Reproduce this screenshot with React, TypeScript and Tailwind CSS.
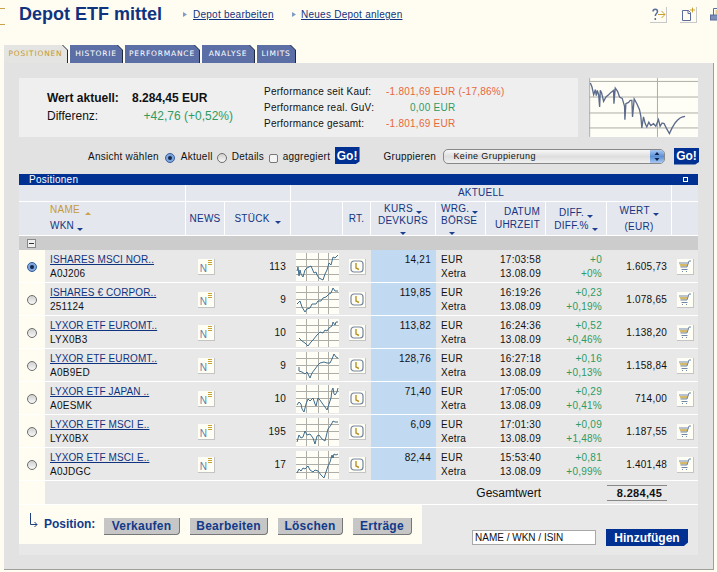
const rows = [
  { name: 'ISHARES MSCI NOR..', wkn: 'A0J206', qty: '113', kurs: '14,21', time: '17:03:58', diff: '+0', pct: '+0%', wert: '1.605,73', selected: true,
    line: '1,18 2,14 3,23 4,17 5,21 7,24 9,17 11,15 15,13 18,20 20,19 21,22 23,25 27,27 29,21 31,17 33,10 35,12 37,4 39,5 42,2' },
  { name: 'ISHARES € CORPOR..', wkn: '251124', qty: '9', kurs: '119,85', time: '16:19:26', diff: '+0,23', pct: '+0,19%', wert: '1.078,65',
    line: '1,18 4,15 6,21 9,26 11,23 14,22 16,18 20,18 22,15 25,15 27,12 30,11 33,8 35,7 37,2 39,5 42,5' },
  { name: 'LYXOR ETF EUROMT..', wkn: 'LYX0B3', qty: '10', kurs: '113,82', time: '16:24:36', diff: '+0,52', pct: '+0,46%', wert: '1.138,20',
    line: '3,19 6,22 9,24 12,27 15,23 17,21 21,16 24,13 27,14 29,11 31,12 33,9 36,7 37,3 39,6 40,3 42,3' },
  { name: 'LYXOR ETF EUROMT..', wkn: 'A0B9ED', qty: '9', kurs: '128,76', time: '16:27:18', diff: '+0,16', pct: '+0,13%', wert: '1.158,84',
    line: '3,15 3,19 6,20 9,22 11,20 14,26 16,21 19,17 22,13 24,11 28,10 31,11 34,11 36,7 38,2 40,5 42,6' },
  { name: 'LYXOR ETF JAPAN ..', wkn: 'A0ESMK', qty: '10', kurs: '71,40', time: '17:05:00', diff: '+0,29', pct: '+0,41%', wert: '714,00',
    line: '1,20 3,17 5,19 6,24 8,27 10,19 12,14 14,16 17,13 19,19 20,21 22,13 24,15 26,18 29,22 31,25 33,19 35,13 36,5 37,3 38,9 39,10 41,7 42,3' },
  { name: 'LYXOR ETF MSCI E..', wkn: 'LYX0BX', qty: '195', kurs: '6,09', time: '17:01:30', diff: '+0,09', pct: '+1,48%', wert: '1.187,55',
    line: '1,24 3,17 5,20 7,19 9,13 11,17 14,16 17,20 19,26 21,18 23,17 26,21 29,23 31,15 32,11 35,7 37,3 39,4 42,4' },
  { name: 'LYXOR ETF MSCI E..', wkn: 'A0JDGC', qty: '17', kurs: '82,44', time: '15:53:40', diff: '+0,81', pct: '+0,99%', wert: '1.401,48',
    line: '1,22 3,18 5,20 7,17 9,18 12,15 14,19 17,21 19,19 22,20 25,24 28,27 30,21 32,15 34,11 36,4 37,7 38,3 40,4 42,3' },
];

function SortDown({ className = '' }: { className?: string }) {
  return (
    <svg width="6" height="3" viewBox="0 0 6 3" className={`inline-block align-[-2px] ${className}`}>
      <path d="M0 0h6L3 3z" fill="#1c3f8f" />
    </svg>
  );
}

function SortUp() {
  return (
    <svg width="6" height="3" viewBox="0 0 6 3" className="inline-block align-[-2px] ml-[2px]">
      <path d="M0 3h6L3 0z" fill="#c9a24a" />
    </svg>
  );
}

function Radio({ on = false, row = false }: { on?: boolean; row?: boolean }) {
  const size = row ? 'w-[10px] h-[10px]' : 'w-[10px] h-[10px] mt-[6px]';
  if (on) {
    return (
      <span className={`${size} inline-flex items-center justify-center rounded-full bg-[#7ea6dc] border border-[#3a5f9c]`}>
        <span className="w-[4px] h-[4px] rounded-full bg-[#12284f]" />
      </span>
    );
  }
  return <span className={`${size} inline-block rounded-full bg-gradient-to-b from-[#d0d0d0] to-[#f8f8f8] border border-[#6d6d6d]`} />;
}

function GoButton() {
  return (
    <button className="w-[25px] h-[17px] bg-[#003092] text-white text-[12px] font-bold tracking-normal leading-[16px] [clip-path:polygon(0_0,100%_0,100%_85%,85%_100%,0_100%)]">
      Go!
    </button>
  );
}

function IconBox({ children, className = '' }: { children: React.ReactNode; className?: string }) {
  return (
    <div className={`w-[17px] h-[16px] bg-[#fffef4] border-r border-b border-[#c4c4c4] flex items-center justify-center ${className}`}>
      {children}
    </div>
  );
}

function NewsIcon() {
  return (
    <IconBox className="relative ml-[12px]">
      <span className="text-[10px] leading-none text-[#5f7fa8] mt-[4px] mr-[5px]">N</span>
      <svg width="4" height="5" viewBox="0 0 4 5" className="absolute top-[1px] right-[2px]">
        <path d="M0 .5h4M0 2.500h4M0 4.500h4" stroke="#c9a230" strokeWidth="1" />
      </svg>
    </IconBox>
  );
}

function ClockIcon() {
  return (
    <IconBox className="ml-[6px]">
      <svg width="14" height="13" viewBox="0 0 14 13">
        <rect x="1" y="1" width="12" height="11" rx="3" fill="#fffef4" stroke="#75849f" strokeWidth="1.200" />
        <path d="M6 3v5l3 1.500" fill="none" stroke="#b8922a" strokeWidth="1.400" />
      </svg>
    </IconBox>
  );
}

function CartIcon() {
  return (
    <IconBox className="ml-[5px]">
      <svg width="14" height="13" viewBox="0 0 14 13" fill="none">
        <path d="M1.500 4h8.500l-.8 2.500H2.500z" fill="#d4b968" />
        <path d="M1 3h9.500M2.500 7h6.500L11 1h2M3.500 9.500h6" stroke="#7088ab" strokeWidth="1" />
        <path d="M4 11.500h1M8 11.500h1" stroke="#7088ab" strokeWidth="1.200" />
      </svg>
    </IconBox>
  );
}

function Spark({ line }: { line: string }) {
  return (
    <svg width="43" height="28" viewBox="0 0 43 28" className="ml-[5px] block bg-[#fffef6]">
      <path d="M0 6.500h43M0 13.500h43M0 21.500h43M10.500 0v28M22.500 0v28M32.500 0v28" stroke="#aeaea8" strokeWidth="1" />
      <polyline points={line} fill="none" stroke="#3d6c8e" strokeWidth="1" />
    </svg>
  );
}

function BigChart() {
  return (
    <svg width="109" height="59" viewBox="686 235 328 177" className="bg-[#fffef6] shrink-0">
      <path d="M686 245h328M686 292h328M686 340h328M686 385h328M892 235v177M688 235v177" stroke="#adada7" strokeWidth="3" />
      <polyline
        points="690,250 695,262 700,285 705,270 708,288 711,272 715,285 718,322 720,272 724,280 730,305 737,292 745,285 752,278 760,272 761,312 765,265 772,275 778,292 786,296 793,320 794,360 797,312 805,308 810,302 815,302 817,352 822,298 830,312 838,330 842,350 845,385 850,352 855,372 860,382 866,368 872,378 880,372 887,380 895,360 900,380 906,370 912,372 920,388 928,402 936,385 945,370 952,362 960,355 968,352 975,350"
        fill="none"
        stroke="#5c6b8c"
        strokeWidth="4"
      />
    </svg>
  );
}

function Tab({ label, active = false, className }: { label: string; active?: boolean; className: string }) {
  return (
    <div className={`h-[18px] pr-[1px] bg-[#20283f] [clip-path:polygon(0_0,calc(100%-5px)_0,100%_5px,100%_100%,0_100%)] ${className}`}>
      <div
        className={`h-full flex items-center justify-center text-[7.5px] tracking-[0.8px] font-['DejaVu_Sans',sans-serif] [clip-path:polygon(0_0,calc(100%-5px)_0,100%_5px,100%_100%,0_100%)] ${
          active ? 'bg-[#e4e4e2] text-[#c49a2c]' : 'bg-[#5b6fa6] text-white'
        }`}
      >
        {label}
      </div>
    </div>
  );
}

function ActionButton({ label, className }: { label: string; className: string }) {
  return (
    <button className={`h-[17px] mt-[13px] bg-[#c6c6c6] text-[#123a8a] text-[12px] font-bold leading-[16px] border-r border-b border-[#777] rounded-br-[4px] ${className}`}>
      {label}
    </button>
  );
}

const cell = 'border-b border-white pt-[2px]';

export default function App() {
  return (
    <div className="w-[717px] h-[572px] overflow-hidden bg-[#fffdf2] text-[10px] text-[#111] tracking-[0.25px] font-['Liberation_Sans',Arial,sans-serif]">
      {/* Header */}
      <div className="h-[45px] flex items-start">
        <div className="w-[5px] h-[17px] mt-[8px] border-y border-[#c9a24a] shrink-0" />
        <h1 className="ml-[14px] text-[18px] font-bold leading-[28px] tracking-normal text-[#10337f] w-[159px]">Depot ETF mittel</h1>
        <a className="ml-[5px] mt-[7px] w-[109px] flex items-center gap-[6px] text-[#10337f]">
          <svg width="4" height="5" viewBox="0 0 4 5"><path d="M0 0l4 2.500-4 2.500z" fill="#7f9cc4" /></svg>
          <span className="underline">Depot bearbeiten</span>
        </a>
        <a className="mt-[7px] flex items-center gap-[5px] text-[#10337f]">
          <svg width="4" height="5" viewBox="0 0 4 5"><path d="M0 0l4 2.500-4 2.500z" fill="#7f9cc4" /></svg>
          <span className="underline">Neues Depot anlegen</span>
        </a>
        <div className="ml-auto mt-[7px] flex gap-[13px] w-[67px] shrink-0 overflow-hidden">
          <div className="w-[17px] h-[16px] shrink-0 border-r border-b border-[#c8c8c8]">
            <svg width="16" height="15" viewBox="0 0 16 15" fill="none">
              <path d="M3 4.500c0-3 4.500-3 4.500 0 0 2-2.200 2-2.200 4.500M5.300 11v2" stroke="#5a6d9c" strokeWidth="1.500" />
              <path d="M8 7.500h7M11.500 4l3.500 3.500-3.500 3.500" stroke="#c9a230" strokeWidth="1" />
            </svg>
          </div>
          <div className="w-[17px] h-[16px] shrink-0 border-r border-b border-[#c8c8c8]">
            <svg width="16" height="15" viewBox="0 0 16 15" fill="none">
              <path d="M2.500 3.500h6l2 2v8h-8zM8 3.500v3h3" stroke="#5a6d9c" strokeWidth="1" />
              <path d="M10 3h5M12.500 .5v5" stroke="#c9a230" strokeWidth="1" />
            </svg>
          </div>
          <div className="w-[17px] h-[16px] shrink-0">
            <svg width="17" height="15" viewBox="0 0 17 15" fill="none">
              <path d="M3.500 8V1.500h9V8" stroke="#5a6d9c" strokeWidth="1" />
              <path d="M5.500 4h5M5.500 6h5" stroke="#c9a230" strokeWidth="1" />
              <rect x=".5" y="8" width="15" height="5" fill="#7f8fb5" stroke="#5a6d9c" />
            </svg>
          </div>
        </div>
      </div>

      {/* Tabs */}
      <div className="h-[18px] ml-[4px] flex">
        <Tab label="POSITIONEN" active className="w-[64px]" />
        <Tab label="HISTORIE" className="ml-[2px] w-[53px]" />
        <Tab label="PERFORMANCE" className="ml-[2px] w-[75px]" />
        <Tab label="ANALYSE" className="ml-[2px] w-[53px]" />
        <Tab label="LIMITS" className="ml-[2px] w-[39px]" />
      </div>

      {/* Panel */}
      <div className="ml-[4px] w-[710px] h-[507px] bg-[#e2e2e2] border-b border-r border-[#a0a09a] pl-[15px] pt-[15px]">
        <div className="flex">
          <div className="w-[559px] h-[59px] bg-[#efefef] flex">
            <div className="w-[245px] pl-[28px] pt-[11px] text-[12px] tracking-normal">
              <div className="flex font-bold leading-[18px]">
                <span className="w-[85px]">Wert aktuell:</span>
                <span>8.284,45 EUR</span>
              </div>
              <div className="flex leading-[19px] w-[186px]">
                <span>Differenz:</span>
                <span className="ml-auto text-[#2e9b63]">+42,76 (+0,52%)</span>
              </div>
            </div>
            <div className="pt-[6px] leading-[16px]">
              <div className="flex">
                <span className="w-[122px]">Performance seit Kauf:</span>
                <span className="text-[#e8683a]">-1.801,69 EUR (-17,86%)</span>
              </div>
              <div className="flex">
                <span className="w-[146px]">Performance real. GuV:</span>
                <span className="text-[#2e9b63]">0,00 EUR</span>
              </div>
              <div className="flex">
                <span className="w-[122px]">Performance gesamt:</span>
                <span className="text-[#e8683a]">-1.801,69 EUR</span>
              </div>
            </div>
          </div>
          <div className="ml-[11px]"><BigChart /></div>
        </div>

        {/* View and grouping controls */}
        <div className="h-[37px] w-[680px] pl-[69px] pt-[10px] flex items-start leading-[20px]">
          <span className="w-[77px]">Ansicht wählen</span>
          <Radio on />
          <span className="ml-[6px] w-[36px]">Aktuell</span>
          <Radio />
          <span className="ml-[5px] w-[37px]">Details</span>
          <span className="w-[9px] h-[9px] mt-[7px] bg-[#f4f4f4] border border-[#777] rounded-[2px]" />
          <span className="ml-[5px] w-[52px]">aggregiert</span>
          <GoButton />
          <span className="ml-[24px] w-[60px]">Gruppieren</span>
          <div className="w-[222px] h-[15px] mt-[2px] rounded-[5px] border border-[#888] bg-gradient-to-b from-[#f8f8f8] via-[#dedede] to-[#f0f0f0] flex items-center overflow-hidden">
            <span className="ml-[9px] text-[9px] tracking-[0.4px] leading-none">Keine Gruppierung</span>
            <span className="ml-auto w-[14px] h-full bg-gradient-to-b from-[#a9c8f0] via-[#5b8fd6] to-[#a9c8f0] flex items-center justify-center">
              <svg width="6" height="9" viewBox="0 0 6 9"><path d="M3 0l2.500 3h-5zM3 9L.5 6h5z" fill="#10244d" /></svg>
            </span>
          </div>
          <div className="ml-[9px]"><GoButton /></div>
        </div>

        {/* Positions table */}
        <div className="w-[679px] h-[11px] bg-[#003092] flex items-center pl-[10px] pr-[10px] text-white leading-none">
          <span>Positionen</span>
          <span className="ml-auto w-[5px] h-[5px] border border-white" />
        </div>
        <table className="w-[679px] table-fixed border-separate border-spacing-0 text-right">
          <colgroup>
            <col className="w-[26px]" />
            <col className="w-[141px]" />
            <col className="w-[39px]" />
            <col className="w-[66px]" />
            <col className="w-[52px]" />
            <col className="w-[28px]" />
            <col className="w-[65px]" />
            <col className="w-[49px]" />
            <col className="w-[61px]" />
            <col className="w-[61px]" />
            <col className="w-[65px]" />
            <col className="w-[26px]" />
          </colgroup>
          <thead className="text-[#14347f] bg-[#e4e7ee] leading-[12px]">
            <tr className="h-[17px]">
              <th colSpan={2} className="font-normal border-b border-r border-white" />
              <th colSpan={2} className="font-normal border-b border-r border-white" />
              <th colSpan={7} className="font-normal text-center border-b border-r border-white">AKTUELL</th>
              <th className="font-normal border-b border-white" />
            </tr>
            <tr className="h-[34px]">
              <th colSpan={2} className="font-normal text-left pl-[31px] pb-[1px] border-b border-r border-white">
                <div className="text-[#c49a3c] leading-[16px]">NAME <SortUp /></div>
                <div className="leading-[16px]">WKN <SortDown /></div>
              </th>
              <th className="font-normal text-center border-b border-r border-white">NEWS</th>
              <th className="font-normal text-center border-b border-r border-white">STÜCK <SortDown className="ml-[2px]" /></th>
              <th className="font-normal border-b border-r border-white" />
              <th className="font-normal text-center border-b border-r border-white">RT.</th>
              <th className="font-normal text-center border-b border-r border-white">
                <div>KURS <SortDown /></div>
                <div>DEVKURS</div>
                <div className="leading-[5px]"><SortDown /></div>
              </th>
              <th className="font-normal text-left pl-[5px] border-b border-white">
                <div>WRG. <SortDown /></div>
                <div>BÖRSE</div>
                <div className="leading-[5px] pl-[8px]"><SortDown /></div>
              </th>
              <th className="font-normal pr-[5px] pb-[2px] border-b border-r border-l border-white leading-[13px]">
                <div>DATUM</div>
                <div>UHRZEIT</div>
              </th>
              <th className="font-normal text-center border-b border-r border-white">
                <div className="leading-[13px]">DIFF. <SortDown /></div>
                <div className="leading-[13px]">DIFF.% <SortDown /></div>
              </th>
              <th className="font-normal text-center border-b border-r border-white leading-[16px]">
                <div>WERT <SortDown /></div>
                <div>(EUR)</div>
              </th>
              <th className="font-normal border-b border-white" />
            </tr>
          </thead>
          <tbody>
            <tr className="h-[14px] bg-[#cccccc]">
              <td colSpan={12} className="text-left pl-[8px]">
                <span className="w-[9px] h-[9px] bg-[#f0f0f0] border border-[#888] flex items-center justify-center">
                  <span className="w-[5px] h-[1px] bg-[#333]" />
                </span>
              </td>
            </tr>
            {rows.map((r) => (
              <tr key={r.wkn} className="h-[33px] bg-[#e8e8e8] leading-[14px]">
                <td className={`bg-[#fffdf2] ${cell}`}>
                  <div className="flex justify-center"><Radio on={r.selected} row /></div>
                </td>
                <td className={`text-left pl-[5px] ${cell}`}>
                  <a className="block underline text-[#10337f] tracking-[0.1px]">{r.name}</a>
                  <div>{r.wkn}</div>
                </td>
                <td className={cell}><NewsIcon /></td>
                <td className={`pr-[5px] ${cell}`}>{r.qty}</td>
                <td className={cell}><Spark line={r.line} /></td>
                <td className={cell}><ClockIcon /></td>
                <td className="bg-[#c2d9f2] pr-[5px] align-top pt-[3px] border-b border-white">{r.kurs}</td>
                <td className={`text-left pl-[5px] ${cell}`}>
                  <div>EUR</div>
                  <div>Xetra</div>
                </td>
                <td className={`pr-[5px] ${cell}`}>
                  <div>{r.time}</div>
                  <div>13.08.09</div>
                </td>
                <td className={`pr-[5px] text-[#2e9b63] ${cell}`}>
                  <div>{r.diff}</div>
                  <div>{r.pct}</div>
                </td>
                <td className={`pr-[5px] ${cell}`}>{r.wert}</td>
                <td className={cell}><CartIcon /></td>
              </tr>
            ))}
            <tr className="h-[24px] bg-[#e8e8e8]">
              <td className="bg-[#fffdf2] border-b border-white" />
              <td colSpan={7} className="border-b border-white" />
              <td className="text-right pr-[5px] text-[12px] tracking-normal whitespace-nowrap border-b border-white overflow-visible">
                <span className="float-right">Gesamtwert</span>
              </td>
              <td colSpan={2} className="border-b border-white pr-[5px]">
                <div className="ml-auto w-[60px] pr-[5px] border-y border-[#888] text-[11px] font-bold tracking-[0.3px] leading-[14px]">8.284,45</div>
              </td>
              <td className="border-b border-white" />
            </tr>
          </tbody>
        </table>

        {/* Position actions and add form */}
        <div className="w-[679px] h-[50px] bg-[#e8e8e8] flex items-start">
          <div className="w-[403px] h-[39px] bg-[#fffdf2] flex items-start">
            <svg width="9" height="16" viewBox="0 0 9 16" className="ml-[10px] mt-[8px] shrink-0" fill="none">
              <path d="M1.500 0v11.500H8M5.500 9L8 11.500 5.500 14" stroke="#20407f" strokeWidth="1" />
            </svg>
            <span className="ml-[6px] mt-[11px] text-[12px] font-bold tracking-normal text-[#123a8a] w-[60px] leading-[16px]">Position:</span>
            <ActionButton label="Verkaufen" className="w-[76px]" />
            <ActionButton label="Bearbeiten" className="ml-[10px] w-[78px]" />
            <ActionButton label="Löschen" className="ml-[10px] w-[65px]" />
            <ActionButton label="Erträge" className="ml-[10px] w-[59px]" />
          </div>
          <div className="ml-[50px] mt-[25px] w-[124px] h-[15px] bg-white border border-[#a8a8a8] pl-[2px] text-[10px] leading-[14px] tracking-normal">NAME / WKN / ISIN</div>
          <button className="ml-[10px] mt-[24px] w-[82px] h-[17px] bg-[#003092] text-white text-[12px] font-bold tracking-normal leading-[16px] [clip-path:polygon(0_0,100%_0,100%_80%,95%_100%,0_100%)]">
            Hinzufügen
          </button>
        </div>
      </div>
    </div>
  );
}
